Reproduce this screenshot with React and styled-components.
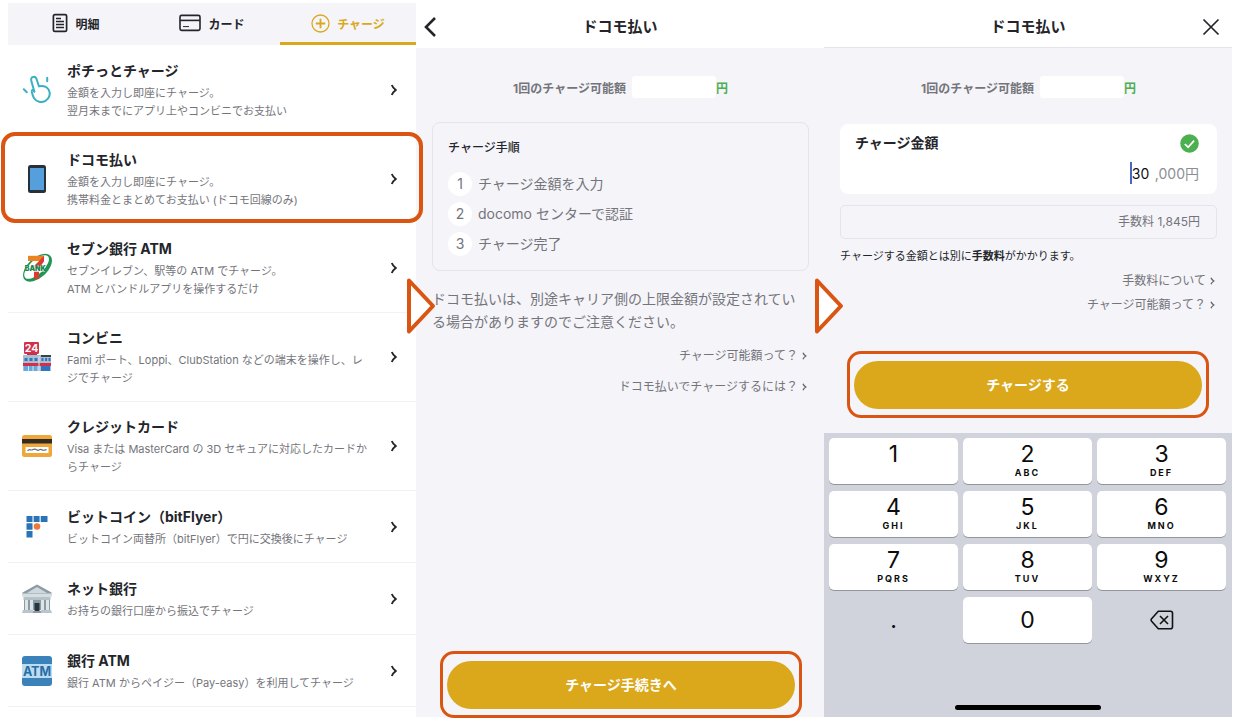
import React from "react";
import styled, { createGlobalStyle, css } from "styled-components";

const color = {
  ink: "#24252a",
  sub: "#74757b",
  line: "#e4e5ea",
  rowLine: "#f1f2f5",
  panel: "#f4f4f9",
  gold: "#dba81c",
  orange: "#d95511",
  green: "#4caf50",
  pad: "#d0d3dc",
};

const GlobalStyle = createGlobalStyle`
  *, *::before, *::after { box-sizing: border-box; }
  body {
    margin: 0;
    background: #fff;
    color: ${color.ink};
    font-family: Inter, "Noto Sans CJK JP", sans-serif;
    font-size: 12px;
  }
  h1, h2, h3, p, ul, ol { margin: 0; padding: 0; list-style: none; }
  button, input { font: inherit; color: inherit; border: 0; padding: 0; background: none; }
  a { color: inherit; text-decoration: none; }
  svg { display: block; flex: none; }
`;

const Page = styled.main`
  display: grid;
  grid-template-columns: repeat(3, minmax(0, 1fr));
  min-height: 100vh;
  padding: 3px 1px 2px 8px;
  overflow: hidden;
`;

const Screen = styled.section`
  position: relative;
  display: flex;
  flex-direction: column;
  background: ${(p) => (p.$tinted ? color.panel : "#fff")};
`;

const Tabs = styled.nav`
  display: flex;
  height: 42px;
  background: ${color.panel};
`;

const Tab = styled.button`
  flex: 1;
  display: flex;
  align-items: center;
  justify-content: center;
  gap: 7px;
  padding-top: 1px;
  border-bottom: 3px solid ${(p) => (p.$active ? color.gold : "transparent")};
  color: ${(p) => (p.$active ? color.gold : color.ink)};
  font-weight: 700;
`;

const highlightFrame = css`
  content: "";
  position: absolute;
  border-style: solid;
  border-color: ${color.orange};
  border-radius: 14px;
  pointer-events: none;
`;

const MethodList = styled.ul`
  padding-top: 1px;
`;

const MethodItem = styled.li`
  position: relative;
  ${(p) =>
    p.$highlighted &&
    css`
      z-index: 2;
      &::after {
        ${highlightFrame}
        inset: -3px -7px 1px;
        border-width: 4px;
      }
    `}
`;

const MethodLink = styled.a`
  display: flex;
  align-items: center;
  min-height: ${(p) => (p.$tall ? 89 : 72)}px;
  padding: 0 19px 0 14px;
  border-bottom: 1px solid ${(p) => (p.$noLine ? "transparent" : color.rowLine)};
`;

const MethodText = styled.div`
  flex: 1;
  min-width: 0;
  margin-left: 15px;
`;

const MethodName = styled.h2`
  margin-bottom: 3px;
  font-size: 14px;
  line-height: 21px;
  font-weight: 700;
`;

const MethodNote = styled.p`
  font-size: 11px;
  line-height: 18px;
  color: ${color.sub};
`;

const Header = styled.header`
  display: grid;
  grid-template-columns: 44px 1fr 44px;
  align-items: center;
  height: 45px;
  padding-top: 3px;
  background: #fff;
  border-bottom: 1px solid ${(p) => (p.$lined ? color.line : "#fff")};
`;

const HeaderTitle = styled.h1`
  grid-column: 2;
  font-size: 15px;
  line-height: 24px;
  font-weight: 700;
  text-align: center;
`;

const IconButton = styled.button`
  display: flex;
  align-items: center;
  height: 30px;
  padding: ${(p) => (p.$end ? "0 12px" : "0 7px")};
  justify-content: ${(p) => (p.$end ? "flex-end" : "flex-start")};
  grid-column: ${(p) => (p.$end ? 3 : 1)};
  grid-row: 1;
`;

const Content = styled.div`
  flex: 1;
  display: flex;
  flex-direction: column;
  padding: 0 15px 0 16px;
`;

const Limit = styled.p`
  display: flex;
  align-items: center;
  justify-content: center;
  height: 24px;
  margin: 27px 0 ${(p) => p.$gap}px;
  font-weight: 700;
  color: ${color.sub};
`;

const LimitValue = styled.span`
  width: 84px;
  height: 22px;
  margin-left: 6px;
  background: #fff;
  border-radius: 3px;
`;

const Unit = styled.span`
  color: ${color.green};
`;

const Steps = styled.div`
  padding: 13px 15px 14px;
  border: 1px solid ${color.line};
  border-radius: 8px;
`;

const StepsTitle = styled.h2`
  font-size: 12px;
  line-height: 24px;
  font-weight: 500;
`;

const StepList = styled.ol`
  display: grid;
  gap: 6px;
  margin-top: 12px;
`;

const Step = styled.li`
  display: flex;
  align-items: center;
  gap: 6px;
  font-size: 14px;
  line-height: 24px;
  color: ${color.sub};
`;

const StepNumber = styled.span`
  width: 24px;
  border-radius: 12px;
  background: #fff;
  text-align: center;
`;

const Notice = styled.p`
  margin-top: 16px;
  font-size: 14px;
  line-height: 23px;
  color: ${color.sub};
`;

const HelpLinks = styled.div`
  display: flex;
  flex-direction: column;
  align-items: flex-end;
  gap: ${(p) => p.$gap}px;
  margin-top: ${(p) => p.$top}px;
  padding-right: 2px;
`;

const HelpLink = styled.a`
  display: flex;
  align-items: center;
  gap: 4px;
  line-height: 20px;
  color: ${color.sub};
`;

const ActionArea = styled.div`
  position: relative;
  margin: ${(p) => (p.$bottom ? "auto 14px 8px 15px" : "46px 15px 24px 14px")};
  &::after {
    ${highlightFrame}
    inset: -10px -7px -9px;
    border-width: 3px;
  }
`;

const PrimaryButton = styled.button`
  display: block;
  width: 100%;
  height: 48px;
  padding-bottom: 2px;
  border-radius: 24px;
  background: ${color.gold};
  color: #fff;
  font-size: 14px;
  font-weight: 700;
`;

const AmountCard = styled.div`
  padding: 9px 18px 10px 15px;
  border-radius: 8px;
  background: #fff;
`;

const AmountHead = styled.div`
  display: flex;
  align-items: center;
  justify-content: space-between;
  font-size: 14px;
  line-height: 20px;
  font-weight: 700;
`;

const AmountRow = styled.div`
  display: flex;
  align-items: center;
  justify-content: flex-end;
  height: 22px;
  margin-top: 9px;
  font-size: 14px;
  color: #8d8e94;
`;

const AmountInput = styled.input`
  width: 25px;
  height: 22px;
  border-left: 2px solid #4468c0;
  color: #111;
  outline: 0;
`;

const FeeBox = styled.p`
  height: 34px;
  margin-top: 11px;
  padding-right: 16px;
  border: 1px solid ${color.line};
  border-radius: 5px;
  font-size: 12px;
  line-height: 32px;
  text-align: right;
  color: ${color.sub};
`;

const FeeNote = styled.p`
  margin-top: 8px;
  font-size: 11px;
  line-height: 18px;
`;

const Keypad = styled.div`
  flex: 1;
  display: flex;
  flex-direction: column;
  justify-content: space-between;
  align-items: center;
  padding: 5px 6px 7px 5px;
  background: ${color.pad};
`;

const Keys = styled.div`
  display: grid;
  grid-template-columns: repeat(3, 1fr);
  gap: 7px 5px;
  width: 100%;
`;

const Key = styled.button`
  display: flex;
  flex-direction: column;
  align-items: center;
  justify-content: ${(p) => (p.$centered ? "center" : "flex-start")};
  height: 46px;
  padding-top: ${(p) => (p.$centered ? 0 : 4)}px;
  border-radius: 5px;
  color: #0c0c0c;
  ${(p) =>
    !p.$bare &&
    css`
      background: #fff;
      box-shadow: 0 1px 0 #94969d;
    `}
`;

const KeyDigit = styled.span`
  font-size: 23px;
  line-height: 24px;
`;

const KeyLetters = styled.span`
  margin-top: 1px;
  font-size: 9px;
  line-height: 12px;
  font-weight: 700;
  letter-spacing: 2px;
`;

const HomeBar = styled.div`
  width: 146px;
  height: 5px;
  border-radius: 3px;
  background: #000;
`;

const FlowArrowSvg = styled.svg`
  position: absolute;
  z-index: 3;
  left: -10px;
  top: 274px;
`;

function FlowArrow() {
  return (
    <FlowArrowSvg width="30" height="58" viewBox="0 0 30 58" aria-hidden="true">
      <path d="M3 3.5 27 29 3 54.5Z" fill="#fff" stroke={color.orange} strokeWidth="4" strokeLinejoin="round" />
    </FlowArrowSvg>
  );
}

function Chevron({ small }) {
  return small ? (
    <svg width="5" height="8" viewBox="0 0 5 8" fill="none" stroke="#66676d" strokeWidth="1.3">
      <path d="M1 .8Q1.6 2.6 3.8 4 1.6 5.4 1 7.2" />
    </svg>
  ) : (
    <svg width="7" height="12" viewBox="0 0 7 12" fill="none" stroke={color.ink} strokeWidth="1.9">
      <path d="M1.8 1Q2.8 3.8 5.8 6 2.8 8.2 1.8 11" />
    </svg>
  );
}

const StatementIcon = () => (
  <svg width="16" height="20" viewBox="0 0 16 20" fill="none" stroke={color.ink} strokeWidth="1.7">
    <rect x="1.4" y="1.6" width="13.2" height="16.8" rx="1.5" />
    <path d="M4 5.5h5M4 8.5h8M4 11.500h8M4 14.500h8" strokeWidth="1.5" />
  </svg>
);

const CardIcon = () => (
  <svg width="22" height="18" viewBox="0 0 22 18" fill="none" stroke={color.ink} strokeWidth="1.6">
    <rect x="1" y="1.4" width="20" height="15" rx="1.6" />
    <path d="M1 6.4h20" />
    <path d="M4 12.6h6" strokeWidth="1" />
  </svg>
);

const ChargeIcon = () => (
  <svg width="19" height="19" viewBox="0 0 19 19" fill="none" stroke={color.gold} strokeWidth="1.3">
    <circle cx="9.5" cy="9.5" r="8.5" />
    <path d="M9.5 4.8v9.4M4.8 9.5h9.4" strokeWidth="1.8" />
  </svg>
);

const MethodIcon = ({ children }) => (
  <svg width="30" height="30" viewBox="0 0 30 30" aria-hidden="true">
    {children}
  </svg>
);

const TapIcon = () => (
  <MethodIcon>
    <g fill="none" stroke="#3bb0c3" strokeWidth="2" strokeLinejoin="round" strokeLinecap="round">
      <path d="M12.3 16.5 9.4 6.2C8.7 3.6 9.5 2.2 11.3 1.9c1.7-.3 2.8.7 3.4 2.6l2.2 6.7" />
      <path d="M16.9 11.2c4.6-.7 8 .6 9.8 3.6 2.2 3.8.8 8.8-3.2 11-4 2.3-9 1.2-11.4-2.6-1.1-1.8-1.8-3.9-2.3-6.5-.3-1.8 1.4-2.6 2.5-.2" />
      <path d="M25.2 2.8v3.5M1.8 14.2l3 3" />
    </g>
  </MethodIcon>
);

const PhoneIcon = () => (
  <MethodIcon>
    <rect x="6" y="1" width="18" height="28" rx="2.5" fill="#26313a" />
    <rect x="8" y="4" width="14" height="22" fill="#55a0dc" />
  </MethodIcon>
);

const SevenIcon = () => (
  <MethodIcon>
    <ellipse cx="15.500" cy="14.800" rx="17.500" ry="9.800" transform="rotate(-43 15.500 14.800)" fill="#219653" />
    <ellipse cx="14.600" cy="14" rx="15.600" ry="7" transform="rotate(-43 14.600 14)" fill="#fff" />
    <path d="M6 2.800H22V8H6Z" fill="#ea8423" />
    <path d="M17.500 7.500 22 2.800V8.500L18.500 13v3H12v-3Z" fill="#dd3b31" />
    <path d="M12 18.500h5V26h-5Z" fill="#dd3b31" />
    <rect x="3.500" y="12.400" width="19.500" height="6.200" fill="#fff" opacity=".8" />
    <text x="13.300" y="18" fontSize="7" fontWeight="900" fill="#16854c" textAnchor="middle">BANK</text>
  </MethodIcon>
);

const StoreIcon = () => (
  <MethodIcon>
    <path d="M5 12h10v2H5Z" fill="#a83a50" />
    <rect x="2" y="0" width="15" height="12" rx="1.2" fill="#d32f4b" />
    <text x="9.500" y="9.800" fontSize="10.500" fontWeight="700" fill="#fff" textAnchor="middle">24</text>
    <path d="M1 13h28v16H1Z" fill="#aabdd1" />
    <path d="M19 13h10v2H19Z" fill="#35424e" />
    <path d="M2.500 16h3v3h-3zm5 0h3v3h-3zm5 0h3v3h-3zm7 0h2v3h-2zm3.600 0h2v3h-2zm3.400 0h2v3h-2z" fill="#2d75bd" />
    <path d="M1 21h28v3H1Z" fill="#d32f4b" />
    <path d="M2 24h13v5H2Z" fill="#63a9df" />
    <path d="M19 24h9v5h-9Z" fill="#2d75bd" />
    <path d="M6.500 24v5M11 24v5M17 14v15" stroke="#dbe6ee" strokeWidth="1" />
  </MethodIcon>
);

const CreditIcon = () => (
  <MethodIcon>
    <rect x="0" y="4" width="30" height="22" rx="2.5" fill="#eea73b" />
    <path d="M0 8h30v4.5H0Z" fill="#342c22" />
    <path d="M3.5 16h23v6h-23Z" fill="#fff" />
    <path d="M5.5 20c2-3 3 0 5-1.300s3-.8 5 .5c1.600.8 2.500-2 4.300-.5 1.500 1.200 2.200.8 4.700-.2" fill="none" stroke="#66727a" strokeWidth="1.2" />
  </MethodIcon>
);

const BitFlyerIcon = () => (
  <MethodIcon>
    <path d="M4.500 4h6v6h-6zM11.600 4h6v6h-6zM18.700 4h6.800v6h-6.800zM4.500 11.200h6v6.500h-6zM4.500 19h6v6.500h-6z" fill="#2b73b9" />
    <circle cx="15" cy="14.500" r="3.300" fill="#ee7939" />
  </MethodIcon>
);

const BankIcon = () => (
  <MethodIcon>
    <path d="M15 .5 29.500 8.500v3H.5v-3Z" fill="#8c9ba3" />
    <path d="m15 3 10 6H5Z" fill="#cfd9dd" />
    <path d="M.5 9.500h29v4H.5Z" fill="#d5dee1" />
    <path d="M2 13.500h26V26H2Z" fill="#8b9aa3" />
    <path d="M3 14.500h3V26H3zm5 0h3V26H8zm11 0h3V26h-3zm5 0h3V26h-3z" fill="#dce4e7" />
    <path d="M1.500 13.500h27V16h-27Z" fill="#b5c1c7" />
    <path d="M12.500 19h5v8h-5Z" fill="#263640" />
    <path d="M1 26h10v3H0zm18 0h10l1 3H19z" fill="#b8c5ca" />
    <path d="M11 27h8v2h-8Z" fill="#8b9aa3" />
  </MethodIcon>
);

const AtmIcon = () => (
  <MethodIcon>
    <rect width="30" height="30" rx="3" fill="#3c82ba" />
    <path d="M0 8h30v14H0Z" fill="#bddcf1" />
    <text x="15" y="19.500" fontSize="12.500" fontWeight="700" fill="#266da5" textAnchor="middle">ATM</text>
  </MethodIcon>
);

const methods = [
  { name: "ポチっとチャージ", icon: TapIcon, lines: ["金額を入力し即座にチャージ。", "翌月末までにアプリ上やコンビニでお支払い"], noLine: true },
  { name: "ドコモ払い", icon: PhoneIcon, lines: ["金額を入力し即座にチャージ。", "携帯料金とまとめてお支払い (ドコモ回線のみ)"], noLine: true, highlighted: true },
  { name: "セブン銀行 ATM", icon: SevenIcon, lines: ["セブンイレブン、駅等の ATM でチャージ。", "ATM とバンドルアプリを操作するだけ"] },
  { name: "コンビニ", icon: StoreIcon, lines: ["Fami ポート、Loppi、ClubStation などの端末を操作し、レ", "ジでチャージ"] },
  { name: "クレジットカード", icon: CreditIcon, lines: ["Visa または MasterCard の 3D セキュアに対応したカードか", "らチャージ"] },
  { name: "ビットコイン（bitFlyer）", icon: BitFlyerIcon, lines: ["ビットコイン両替所（bitFlyer）で円に交換後にチャージ"] },
  { name: "ネット銀行", icon: BankIcon, lines: ["お持ちの銀行口座から振込でチャージ"] },
  { name: "銀行 ATM", icon: AtmIcon, lines: ["銀行 ATM からペイジー（Pay-easy）を利用してチャージ"] },
];

const steps = ["チャージ金額を入力", "docomo センターで認証", "チャージ完了"];

const keys = [
  ["1", ""],
  ["2", "ABC"],
  ["3", "DEF"],
  ["4", "GHI"],
  ["5", "JKL"],
  ["6", "MNO"],
  ["7", "PQRS"],
  ["8", "TUV"],
  ["9", "WXYZ"],
];

function ChargeLimit({ gap }) {
  return (
    <Limit $gap={gap}>
      1回のチャージ可能額
      <LimitValue />
      <Unit>円</Unit>
    </Limit>
  );
}

function Help({ children }) {
  return (
    <HelpLink href="#help">
      {children}
      <Chevron small />
    </HelpLink>
  );
}

function MethodScreen() {
  return (
    <Screen>
      <Tabs>
        <Tab type="button"><StatementIcon />明細</Tab>
        <Tab type="button"><CardIcon />カード</Tab>
        <Tab type="button" $active><ChargeIcon />チャージ</Tab>
      </Tabs>
      <MethodList>
        {methods.map(({ name, icon: Icon, lines, noLine, highlighted }) => (
          <MethodItem key={name} $highlighted={highlighted}>
            <MethodLink href="#charge" $tall={lines.length > 1} $noLine={noLine}>
              <Icon />
              <MethodText>
                <MethodName>{name}</MethodName>
                {lines.map((line) => (
                  <MethodNote key={line}>{line}</MethodNote>
                ))}
              </MethodText>
              <Chevron />
            </MethodLink>
          </MethodItem>
        ))}
      </MethodList>
    </Screen>
  );
}

function GuideScreen() {
  return (
    <Screen $tinted>
      <FlowArrow />
      <Header>
        <IconButton type="button" aria-label="戻る">
          <svg width="14" height="22" viewBox="0 0 14 22" fill="none" stroke={color.ink} strokeWidth="2.600">
            <path d="M12 2 3 11l9 9" />
          </svg>
        </IconButton>
        <HeaderTitle>ドコモ払い</HeaderTitle>
      </Header>
      <Content>
        <ChargeLimit gap={23} />
        <Steps>
          <StepsTitle>チャージ手順</StepsTitle>
          <StepList>
            {steps.map((step, i) => (
              <Step key={step}>
                <StepNumber>{i + 1}</StepNumber>
                {step}
              </Step>
            ))}
          </StepList>
        </Steps>
        <Notice>ドコモ払いは、別途キャリア側の上限金額が設定されている場合がありますのでご注意ください。</Notice>
        <HelpLinks $gap={11} $top={13}>
          <Help>チャージ可能額って？</Help>
          <Help>ドコモ払いでチャージするには？</Help>
        </HelpLinks>
        <ActionArea $bottom>
          <PrimaryButton type="button">チャージ手続きへ</PrimaryButton>
        </ActionArea>
      </Content>
    </Screen>
  );
}

function AmountScreen() {
  return (
    <Screen $tinted>
      <FlowArrow />
      <Header $lined>
        <HeaderTitle>ドコモ払い</HeaderTitle>
        <IconButton type="button" aria-label="閉じる" $end>
          <svg width="18" height="18" viewBox="0 0 18 18" fill="none" stroke={color.ink} strokeWidth="1.700">
            <path d="m1.500 1.500 15 15M16.500 1.500l-15 15" />
          </svg>
        </IconButton>
      </Header>
      <Content as="form">
        <ChargeLimit gap={25} />
        <AmountCard>
          <AmountHead>
            <label htmlFor="amount">チャージ金額</label>
            <svg width="19" height="19" viewBox="0 0 19 19" fill="none">
              <circle cx="9.500" cy="9.500" r="9.300" fill={color.green} />
              <path d="m4.800 10 3.300 3.200 6-6.600" stroke="#fff" strokeWidth="1.700" />
            </svg>
          </AmountHead>
          <AmountRow>
            <AmountInput id="amount" inputMode="numeric" defaultValue="30" />
            ,000円
          </AmountRow>
        </AmountCard>
        <FeeBox>手数料 1,845円</FeeBox>
        <FeeNote>チャージする金額とは別に<b>手数料</b>がかかります。</FeeNote>
        <HelpLinks $gap={4} $top={6}>
          <Help>手数料について</Help>
          <Help>チャージ可能額って？</Help>
        </HelpLinks>
        <ActionArea>
          <PrimaryButton type="button">チャージする</PrimaryButton>
        </ActionArea>
      </Content>
      <Keypad>
        <Keys>
          {keys.map(([digit, letters]) => (
            <Key key={digit} type="button">
              <KeyDigit>{digit}</KeyDigit>
              {letters && <KeyLetters>{letters}</KeyLetters>}
            </Key>
          ))}
          <Key type="button" $bare $centered><KeyDigit>.</KeyDigit></Key>
          <Key type="button" $centered><KeyDigit>0</KeyDigit></Key>
          <Key type="button" $bare $centered aria-label="削除">
            <svg width="24" height="20" viewBox="0 0 24 20" fill="none" stroke="#111" strokeWidth="1.600" strokeLinejoin="round">
              <path d="M8.300 1.200h12.200a2 2 0 0 1 2 2v13.600a2 2 0 0 1-2 2H8.300L1.600 11.200q-1-1.200 0-2.400ZM10 6l8 8M18 6l-8 8" />
            </svg>
          </Key>
        </Keys>
        <HomeBar />
      </Keypad>
    </Screen>
  );
}

export default function App() {
  return (
    <>
      <GlobalStyle />
      <Page>
        <MethodScreen />
        <GuideScreen />
        <AmountScreen />
      </Page>
    </>
  );
}
